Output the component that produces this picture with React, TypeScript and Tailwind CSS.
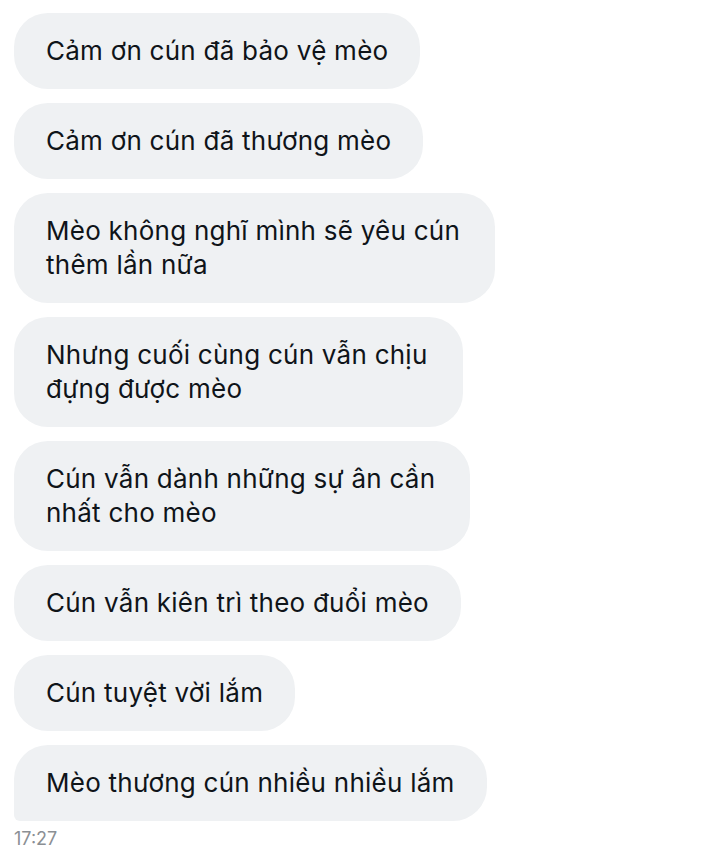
import React from "react";

type Msg = { lines: string[]; last?: boolean };

const msgs: Msg[] = [
  { lines: ["Cảm ơn cún đã bảo vệ mèo"] },
  { lines: ["Cảm ơn cún đã thương mèo"] },
  { lines: ["Mèo không nghĩ mình sẽ yêu cún", "thêm lần nữa"] },
  { lines: ["Nhưng cuối cùng cún vẫn chịu", "đựng được mèo"] },
  { lines: ["Cún vẫn dành những sự ân cần", "nhất cho mèo"] },
  { lines: ["Cún vẫn kiên trì theo đuổi mèo"] },
  { lines: ["Cún tuyệt vời lắm"] },
  { lines: ["Mèo thương cún nhiều nhiều lắm"], last: true },
];

export default function App() {
  return (
    <div
      className="w-[720px] h-[853px] bg-white flex flex-col items-start pl-[14px] pt-[13px]"
      style={{ fontFamily: "Inter, 'Noto Sans', sans-serif" }}
    >
      <div className="flex flex-col items-start gap-[14px]">
        {msgs.map((m, i) => (
          <div
            key={i}
            className={
              m.last
                ? "bg-[#eff1f3] rounded-[34px] rounded-bl-[6px] pl-[32px] pr-[32px] py-[21px] text-[26px] leading-[34px] tracking-[0.25px] text-[#0f1419] whitespace-nowrap"
                : m.lines.length > 1
                ? "bg-[#eff1f3] rounded-[34px] pl-[32px] pr-[35px] py-[21px] text-[26px] leading-[34px] tracking-[0.25px] text-[#0f1419] whitespace-nowrap"
                : "bg-[#eff1f3] rounded-[34px] pl-[32px] pr-[32px] py-[21px] text-[26px] leading-[34px] tracking-[0.25px] text-[#0f1419] whitespace-nowrap"
            }
          >
            {m.lines.map((l, j) => (
              <div key={j}>{l}</div>
            ))}
          </div>
        ))}
      </div>
      <div className="mt-[7px] text-[18px] leading-[22px] text-[#8b8f94]">17:27</div>
    </div>
  );
}
